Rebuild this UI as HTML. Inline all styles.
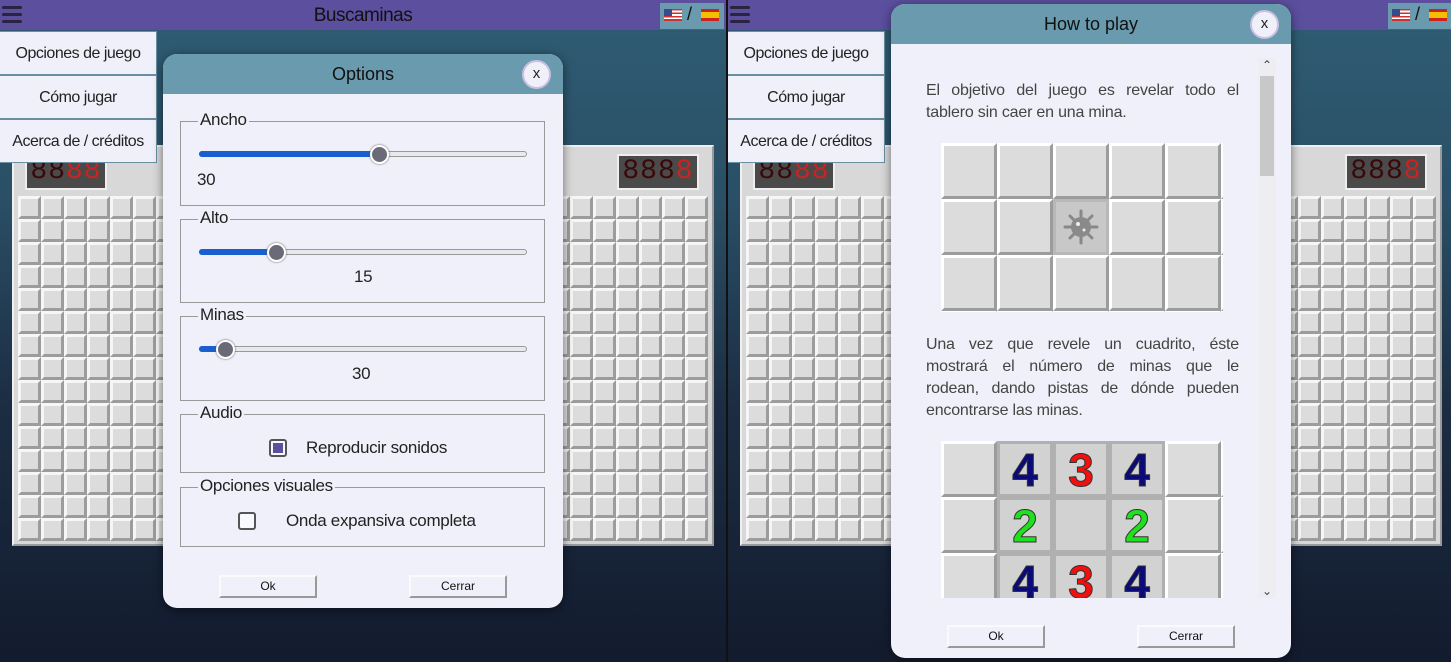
<!DOCTYPE html>
<html><head><meta charset="utf-8"><style>
*{box-sizing:border-box;margin:0;padding:0}
body{width:1451px;height:662px;overflow:hidden;position:relative;font-family:"Liberation Sans",sans-serif;background:#111}
.pane{position:absolute;top:0;width:726px;height:662px;overflow:hidden;background:linear-gradient(180deg,#2f5d74 0%,#2a4f66 30%,#1c2e44 60%,#131b2e 100%)}
.hdr{position:absolute;left:0;top:0;width:726px;height:30px;background:#5b4f9e}
.burger{position:absolute;left:2px;top:6px;width:20px;height:17px}
.burger i{display:block;height:3px;background:#2a2440;border-radius:2px;margin-bottom:4px}
.title{position:absolute;left:0;width:726px;top:5px;text-align:center;font-size:19px;color:#111;letter-spacing:-0.5px}
.flags{position:absolute;left:660px;top:3px;width:64px;height:26px;background:#6a9aae;font-size:18px;color:#111}
.us{position:absolute;left:4px;top:6px;width:18px;height:12px;background:repeating-linear-gradient(180deg,#c33 0 1.7px,#fff 1.7px 3.4px)}
.us:before{content:"";position:absolute;left:0;top:0;width:8px;height:7px;background:#3a4b8c}
.es{position:absolute;left:41px;top:6px;width:18px;height:12px;background:linear-gradient(180deg,#c22 0 3px,#f3c000 3px 9px,#c22 9px)}
.menu{position:absolute;left:0;top:31px;width:157px;background:#f0f0fa;border:1px solid #6a8fa0;border-left:none}
.menu div{height:44px;line-height:44px;text-align:center;font-size:16px;color:#222;border-bottom:2px solid #6a8fa0;letter-spacing:-0.5px}
.menu div:last-child{border-bottom:none;height:42px}
.board{position:absolute;left:12px;top:145px;width:702px;height:401px;background:#d8d8d8;border:2px solid #f0f0f0;border-right-color:#999;border-bottom-color:#999}
.cnt{position:absolute;top:7px;width:82px;height:36px;background:#4a4a4a;border:2px solid #eee;color:#3a0808;font-family:"Liberation Mono",monospace;font-size:28px;line-height:32px;text-align:center;letter-spacing:1px}
.cnt b{color:#c22;font-weight:normal}
.cells{position:absolute;left:4px;top:49px;width:690px;height:345px}
.dlg{position:absolute;width:400px;background:#f0f0fa;border-radius:14px;overflow:hidden;box-shadow:0 2px 10px rgba(0,0,0,.5)}
.dh{height:40px;background:#6a9aae;text-align:center;line-height:40px;font-size:18px;color:#111}
.x{position:absolute;right:12px;top:6px;width:29px;height:29px;border-radius:50%;background:#f0f0fa;border:2px solid #c8c0e0;text-align:center;line-height:24px;font-size:15px;color:#222}
.fs{position:absolute;left:17px;width:365px;border:1px solid #999}
.lg{position:absolute;left:17px;top:-12px;background:#f0f0fa;padding:0 2px;font-size:17px;color:#222;line-height:20px;letter-spacing:-0.3px}
.trk{position:absolute;left:18px;width:328px;height:6px;border-radius:3px;background:#e8e8ee;border:1px solid #999}
.fill{position:absolute;left:-1px;top:-1px;height:6px;border-radius:3px;background:#1a5fd0}
.th{position:absolute;top:-7px;width:19px;height:19px;border-radius:50%;background:#6a6a78;border:2px solid #fff;box-shadow:0 0 2px #555}
.val{position:absolute;font-size:17px;color:#222;letter-spacing:-0.3px}
.btn{position:absolute;width:98px;height:23px;background:#f0f0fa;border:2px solid #fafafa;border-right-color:#999;border-bottom-color:#999;text-align:center;font-size:12px;line-height:19px;color:#111}
.cb{position:absolute;width:18px;height:18px;border:2px solid #555;border-radius:3px;background:#f8f8ff}
.txt{position:absolute;left:35px;width:313px;font-size:16px;line-height:22px;color:#444;letter-spacing:-0.2px}
.txt div{text-align:justify;text-align-last:justify;white-space:nowrap}
.txt div.l{text-align-last:left}
.g{position:absolute;left:50px;width:282px;background:#ccc}
.num{position:absolute;width:56px;height:56px;text-align:center;font:bold 46px/52px "Liberation Sans",sans-serif;background:#d2d2d2;border:3px solid #b0b0b0;-webkit-text-stroke:1px #333}
</style></head><body>
<svg width="0" height="0" style="position:absolute"><defs>
<pattern id="c" width="23" height="23" patternUnits="userSpaceOnUse">
<rect width="23" height="23" fill="#9c9c9c"/><polygon points="0,0 23,0 20,3 3,3 3,20 0,23" fill="#f6f6f6"/><rect x="3" y="3" width="17" height="17" fill="#dcdcdc"/></pattern>
<pattern id="C" width="56" height="56" patternUnits="userSpaceOnUse">
<rect width="56" height="56" fill="#9c9c9c"/><polygon points="0,0 56,0 53,3 3,3 3,53 0,56" fill="#fff"/><rect x="3" y="3" width="50" height="50" fill="#dcdcdc"/></pattern>
</defs></svg>

<div class="pane" style="left:0">
 <div class="board"><div class="cnt" style="left:11px">88<b>88</b></div><div class="cnt" style="left:603px">888<b>8</b></div><svg class="cells" width="690" height="345"><rect width="690" height="345" fill="url(#c)"/></svg></div>
 <div class="hdr"><div class="title">Buscaminas</div><div class="burger"><i></i><i></i><i></i></div>
  <div class="flags"><div class="us"></div><span style="position:absolute;left:27px;top:1px">/</span><div class="es"></div></div></div>
 <div class="menu"><div>Opciones de juego</div><div>Cómo jugar</div><div>Acerca de / créditos</div></div>
 <div class="dlg" style="left:163px;top:54px;height:554px">
  <div class="dh">Options</div><div class="x">x</div>
  <div class="fs" style="top:67px;height:85px"><div class="lg">Ancho</div><div class="trk" style="top:29px"><div class="fill" style="width:182px"></div><div class="th" style="left:170px"></div></div><div class="val" style="left:16px;top:48px">30</div></div>
  <div class="fs" style="top:165px;height:84px"><div class="lg">Alto</div><div class="trk" style="top:29px"><div class="fill" style="width:79px"></div><div class="th" style="left:67px"></div></div><div class="val" style="left:173px;top:47px">15</div></div>
  <div class="fs" style="top:262px;height:85px"><div class="lg">Minas</div><div class="trk" style="top:29px"><div class="fill" style="width:28px"></div><div class="th" style="left:16px"></div></div><div class="val" style="left:171px;top:47px">30</div></div>
  <div class="fs" style="top:360px;height:59px"><div class="lg">Audio</div><div class="cb" style="left:88px;top:24px"><div style="position:absolute;left:2px;top:2px;width:10px;height:10px;background:#5b4f9e"></div></div><div class="val" style="left:125px;top:23px">Reproducir sonidos</div></div>
  <div class="fs" style="top:433px;height:60px"><div class="lg">Opciones visuales</div><div class="cb" style="left:57px;top:24px"></div><div class="val" style="left:105px;top:23px">Onda expansiva completa</div></div>
  <div class="btn" style="left:56px;top:521px">Ok</div><div class="btn" style="left:246px;top:521px">Cerrar</div>
 </div>
</div>

<div class="pane" style="left:728px;width:723px">
 <div class="board"><div class="cnt" style="left:11px">88<b>88</b></div><div class="cnt" style="left:603px">888<b>8</b></div><svg class="cells" width="690" height="345"><rect width="690" height="345" fill="url(#c)"/></svg></div>
 <div class="hdr"><div class="burger"><i></i><i></i><i></i></div>
  <div class="flags"><div class="us"></div><span style="position:absolute;left:27px;top:1px">/</span><div class="es"></div></div></div>
 <div class="menu"><div>Opciones de juego</div><div>Cómo jugar</div><div>Acerca de / créditos</div></div>
</div>
<div class="dlg" style="left:891px;top:4px;height:654px">
 <div class="dh">How to play</div><div class="x">x</div>
 <div style="position:absolute;left:367px;top:54px;width:18px;height:540px;background:#ededf2">
  <div style="position:absolute;top:0;width:18px;text-align:center;font-size:12px;color:#444">&#8963;</div>
  <div style="position:absolute;left:2px;top:18px;width:14px;height:100px;background:#c8c8c8"></div>
  <div style="position:absolute;bottom:0;width:18px;text-align:center;font-size:12px;color:#444">&#8964;</div></div>
 <div class="txt" style="top:76px"><div>El objetivo del juego es revelar todo el</div><div class="l">tablero sin caer en una mina.</div></div>
 <div class="g" style="top:139px;height:169px">
  <svg width="282" height="169" style="position:absolute;left:0;top:0"><rect width="282" height="169" fill="url(#C)"/>
  <rect x="112" y="56" width="56" height="56" fill="#b8b8b8"/><rect x="115" y="59" width="50" height="50" fill="#c8c8c8"/>
  <g stroke="#888" stroke-width="3" stroke-linecap="round">
  <line x1="140" y1="68" x2="140" y2="100"/><line x1="124" y1="84" x2="156" y2="84"/><line x1="129" y1="73" x2="151" y2="95"/><line x1="151" y1="73" x2="129" y2="95"/></g>
  <circle cx="140" cy="84" r="10" fill="#8a8a8a"/><circle cx="137" cy="81" r="2" fill="#eee"/><circle cx="143" cy="87" r="1.5" fill="#eee"/></svg>
 </div>
 <div class="txt" style="top:330px"><div>Una vez que revele un cuadrito, éste</div><div>mostrará el número de minas que le</div><div>rodean, dando pistas de dónde pueden</div><div class="l">encontrarse las minas.</div></div>
 <div class="g" style="top:437px;height:157px;overflow:hidden">
  <svg width="282" height="169" style="position:absolute;left:0;top:0"><rect width="282" height="169" fill="url(#C)"/></svg>
  <div class="num" style="left:56px;top:0;color:#0a0a78">4</div><div class="num" style="left:112px;top:0;color:#f01010">3</div><div class="num" style="left:168px;top:0;color:#0a0a78">4</div>
  <div class="num" style="left:56px;top:56px;color:#20e020">2</div><div class="num" style="left:112px;top:56px"></div><div class="num" style="left:168px;top:56px;color:#20e020">2</div>
  <div class="num" style="left:56px;top:112px;color:#0a0a78">4</div><div class="num" style="left:112px;top:112px;color:#f01010">3</div><div class="num" style="left:168px;top:112px;color:#0a0a78">4</div>
 </div>
 <div class="btn" style="left:56px;top:621px">Ok</div><div class="btn" style="left:246px;top:621px">Cerrar</div>
</div>
</body></html>
